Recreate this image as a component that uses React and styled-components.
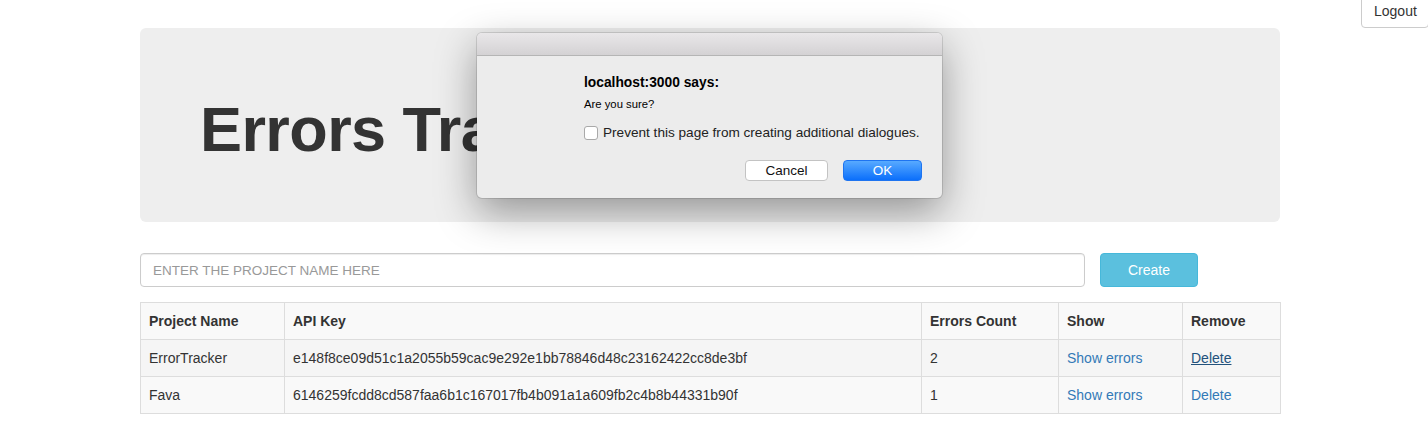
import React from "react";
import styled, { createGlobalStyle } from "styled-components";

const Global = createGlobalStyle`
  html, body { margin: 0; padding: 0; background: #fff; }
  body {
    font-family: "Liberation Sans", Arial, sans-serif;
    font-size: 14px;
    line-height: 1.42857;
    color: #333;
  }
  * { box-sizing: border-box; }
`;

const Page = styled.div`
  position: relative;
  width: 1428px;
  height: 429px;
  overflow: hidden;
`;

const TopBar = styled.div`
  height: 28px;
  display: flex;
  justify-content: flex-end;
  align-items: flex-end;
`;

const LogoutButton = styled.button`
  height: 34px;
  width: 68px;
  margin-right: -1px;
  padding: 6px 12px;
  font-family: inherit;
  font-size: 14px;
  line-height: 20px;
  color: #333;
  background: #fff;
  border: 1px solid #ccc;
  border-radius: 4px;
  flex-shrink: 0;
`;

const Container = styled.div`
  width: 1140px;
  margin-left: 140px;
`;

const Jumbotron = styled.div`
  background: #eee;
  border-radius: 6px;
  padding: 48px 60px;
  margin-bottom: 31px;
`;

const Title = styled.h1`
  margin: 19px 0 10px;
  font-size: 63px;
  line-height: 69px;
  font-weight: bold;
  color: #333;
  letter-spacing: -0.6px;
`;

const FormRow = styled.div`
  display: flex;
  gap: 15px;
  margin-bottom: 15px;
`;

const Input = styled.input`
  width: 945px;
  height: 34px;
  padding: 6px 12px;
  font-family: inherit;
  font-size: 13.5px;
  color: #555;
  border: 1px solid #ccc;
  border-radius: 4px;
  box-shadow: inset 0 1px 1px rgba(0, 0, 0, 0.075);
  &::placeholder { color: #999; }
`;

const CreateButton = styled.button`
  width: 98px;
  height: 34px;
  font-family: inherit;
  font-size: 14px;
  color: #fff;
  background: #5bc0de;
  border: 1px solid #46b8da;
  border-radius: 4px;
`;

const Table = styled.table`
  width: 1140px;
  border-collapse: collapse;
  table-layout: fixed;
`;

const Th = styled.th`
  text-align: left;
  font-weight: bold;
  padding: 8px;
  line-height: 20px;
  border: 1px solid #ddd;
`;

const Td = styled.td`
  padding: 8px;
  line-height: 20px;
  border: 1px solid #ddd;
`;

const Row = styled.tr`
  background: ${(p) => p.$bg};
`;

const Link = styled.a`
  color: ${(p) => (p.$hover ? "#23527c" : "#337ab7")};
  text-decoration: ${(p) => (p.$hover ? "underline" : "none")};
  cursor: pointer;
`;

const Dialog = styled.div`
  position: absolute;
  left: 477px;
  top: 33px;
  width: 465px;
  height: 165px;
  border-radius: 5px;
  background: #ececec;
  overflow: hidden;
  box-shadow: 0 14px 40px rgba(0, 0, 0, 0.38), 0 0 0 1px rgba(0, 0, 0, 0.12);
  font-family: "Liberation Sans", Arial, sans-serif;
  color: #000;
`;

const TitleBar = styled.div`
  height: 23px;
  background: linear-gradient(#e9e7e9, #d4d2d4);
  border-bottom: 1px solid #b5b5b5;
`;

const DialogBody = styled.div`
  padding: 19px 20px 0 107px;
  display: flex;
  flex-direction: column;
`;

const DialogTitle = styled.div`
  font-size: 13.8px;
  font-weight: bold;
  line-height: 15px;
`;

const DialogMessage = styled.div`
  font-size: 11.3px;
  line-height: 13px;
  margin-top: 8px;
`;

const CheckRow = styled.label`
  display: flex;
  align-items: center;
  gap: 5px;
  margin-top: 14px;
  font-size: 13.6px;
  line-height: 16px;
  color: #222;
`;

const CheckBox = styled.span`
  width: 14px;
  height: 14px;
  flex-shrink: 0;
  border: 1px solid #a9a9a9;
  border-radius: 3px;
  background: #fff;
`;

const ButtonRow = styled.div`
  display: flex;
  justify-content: flex-end;
  gap: 15px;
  margin-top: 19px;
`;

const DialogButton = styled.button`
  width: ${(p) => p.$w}px;
  height: 21px;
  font-family: inherit;
  font-size: 13.5px;
  line-height: 19px;
  padding: 0;
  border-radius: 4px;
  color: ${(p) => (p.$primary ? "#fff" : "#111")};
  background: ${(p) =>
    p.$primary ? "linear-gradient(#58aaff, #0b6ffb)" : "#fff"};
  border: 1px solid ${(p) => (p.$primary ? "#1e74f0" : "#c3c3c3")};
`;

const rows = [
  {
    name: "ErrorTracker",
    key: "e148f8ce09d51c1a2055b59cac9e292e1bb78846d48c23162422cc8de3bf",
    count: 2,
    bg: "#f5f5f5",
    hover: true,
  },
  {
    name: "Fava",
    key: "6146259fcdd8cd587faa6b1c167017fb4b091a1a609fb2c4b8b44331b90f",
    count: 1,
    bg: "#f9f9f9",
    hover: false,
  },
];

export default function App() {
  return (
    <Page>
      <Global />
      <TopBar>
        <LogoutButton>Logout</LogoutButton>
      </TopBar>
      <Container>
        <Jumbotron>
          <Title>Errors Tracker</Title>
        </Jumbotron>
        <FormRow>
          <Input placeholder="ENTER THE PROJECT NAME HERE" />
          <CreateButton>Create</CreateButton>
        </FormRow>
        <Table>
          <colgroup>
            <col style={{ width: 144 }} />
            <col style={{ width: 637 }} />
            <col style={{ width: 137 }} />
            <col style={{ width: 124 }} />
            <col style={{ width: 98 }} />
          </colgroup>
          <thead>
            <Row $bg="#f9f9f9">
              <Th>Project Name</Th>
              <Th>API Key</Th>
              <Th>Errors Count</Th>
              <Th>Show</Th>
              <Th>Remove</Th>
            </Row>
          </thead>
          <tbody>
            {rows.map((r) => (
              <Row key={r.name} $bg={r.bg}>
                <Td>{r.name}</Td>
                <Td>{r.key}</Td>
                <Td>{r.count}</Td>
                <Td>
                  <Link>Show errors</Link>
                </Td>
                <Td>
                  <Link $hover={r.hover}>Delete</Link>
                </Td>
              </Row>
            ))}
          </tbody>
        </Table>
      </Container>
      <Dialog>
        <TitleBar />
        <DialogBody>
          <DialogTitle>localhost:3000 says:</DialogTitle>
          <DialogMessage>Are you sure?</DialogMessage>
          <CheckRow>
            <CheckBox />
            Prevent this page from creating additional dialogues.
          </CheckRow>
          <ButtonRow>
            <DialogButton $w={83}>Cancel</DialogButton>
            <DialogButton $w={79} $primary>
              OK
            </DialogButton>
          </ButtonRow>
        </DialogBody>
      </Dialog>
    </Page>
  );
}
